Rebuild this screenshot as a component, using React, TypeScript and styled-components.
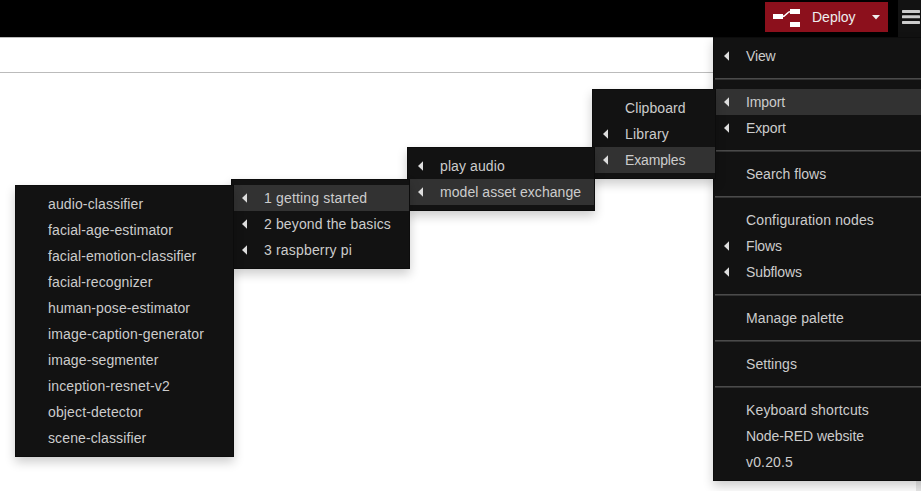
import React from "react";
import styled, { createGlobalStyle, css } from "styled-components";

const GlobalStyle = createGlobalStyle`
  * { box-sizing: border-box; }
  body {
    margin: 0;
    overflow: hidden;
    background: #fff;
    font-family: "Liberation Sans", Arial, sans-serif;
    font-size: 14px;
    line-height: 20px;
  }
`;

const Page = styled.div`
  display: flex;
  flex-direction: column;
  position: relative;
  width: 921px;
  height: 491px;
  overflow: hidden;
  background: #fff;
`;

const Header = styled.header`
  display: flex;
  justify-content: flex-end;
  align-items: flex-start;
  flex: none;
  height: 37px;
  background: #000;
`;

const DeployButton = styled.button`
  display: flex;
  align-items: center;
  width: 123px;
  height: 30px;
  margin: 2px 10px 0 0;
  padding: 0 8px;
  border: 0;
  background: #8c101c;
  color: #eee;
  font: inherit;
`;

const DeployLabel = styled.span`
  margin-left: 11px;
  flex: 1;
  text-align: left;
`;

const MenuButton = styled.button`
  display: flex;
  align-items: flex-start;
  width: 23px;
  height: 37px;
  padding: 9px 0 0 4px;
  border: 0;
  background: #121212;
`;

const TabBar = styled.div`
  flex: none;
  height: 36px;
  border-top: 1px solid #bbb;
  border-bottom: 1px solid #bbb;
`;

const Workspace = styled.main`
  display: flex;
  justify-content: flex-end;
  align-items: flex-end;
  flex: 1;
`;

const ScrollEdge = styled.div`
  width: 5px;
  height: 12px;
  background: #e8e8e8;
`;

const panel = css`
  margin: 0;
  list-style: none;
  background: #121212;
  border: 1px solid #0c0c0c;
  box-shadow: 0 5px 10px rgba(0, 0, 0, 0.2);
`;

const MainMenu = styled.ul`
  ${panel}
  position: absolute;
  top: 37px;
  left: 713px;
  width: 220px;
  padding: 5px 0 5px 2px;
`;

const SubMenu = styled.ul<{ $width: number }>`
  ${panel}
  position: absolute;
  top: 0;
  right: 100%;
  width: ${(p) => p.$width}px;
  padding: 5px 0 5px 2px;
`;

const Item = styled.li<{ $active?: boolean; $tracking?: number }>`
  display: flex;
  align-items: center;
  position: relative;
  height: 26px;
  padding-left: 8px;
  background: ${(p) => (p.$active ? "#323232" : "transparent")};
  color: #ccc;
  letter-spacing: ${(p) => p.$tracking ?? 0}px;
  white-space: nowrap;
`;

const ArrowSlot = styled.span`
  display: flex;
  flex: none;
  width: 22px;
`;

const Divider = styled.li`
  height: 2px;
  margin: 9px 0 9px -1px;
  background: #323232;
  border-top: 1px solid #4a4a4a;
`;

type Entry = {
  label: string;
  arrow?: boolean;
  active?: boolean;
  tracking?: number;
  width?: number;
  children?: Entry[];
};

const classifiers: Entry[] = [
  { label: "audio-classifier", tracking: 0.12 },
  { label: "facial-age-estimator", tracking: 0.1 },
  { label: "facial-emotion-classifier", tracking: 0.08 },
  { label: "facial-recognizer", tracking: 0.1 },
  { label: "human-pose-estimator", tracking: 0.1 },
  { label: "image-caption-generator", tracking: 0.15 },
  { label: "image-segmenter", tracking: 0.1 },
  { label: "inception-resnet-v2", tracking: 0.15 },
  { label: "object-detector", tracking: 0.14 },
  { label: "scene-classifier", tracking: 0.12 },
];

const exchange: Entry[] = [
  {
    label: "1 getting started",
    arrow: true,
    active: true,
    tracking: 0.17,
    width: 219,
    children: classifiers,
  },
  { label: "2 beyond the basics", arrow: true, tracking: 0.13 },
  { label: "3 raspberry pi", arrow: true, tracking: 0.17 },
];

const examples: Entry[] = [
  { label: "play audio", arrow: true, tracking: 0.1 },
  {
    label: "model asset exchange",
    arrow: true,
    active: true,
    tracking: 0.05,
    width: 179,
    children: exchange,
  },
];

const importEntries: Entry[] = [
  { label: "Clipboard", tracking: 0.08 },
  { label: "Library", arrow: true, tracking: 0.15 },
  {
    label: "Examples",
    arrow: true,
    active: true,
    tracking: -0.15,
    width: 188,
    children: examples,
  },
];

const groups: Entry[][] = [
  [{ label: "View", arrow: true, tracking: -0.15 }],
  [
    {
      label: "Import",
      arrow: true,
      active: true,
      tracking: -0.12,
      width: 124,
      children: importEntries,
    },
    { label: "Export", arrow: true, tracking: -0.12 },
  ],
  [{ label: "Search flows" }],
  [
    { label: "Configuration nodes", tracking: 0.14 },
    { label: "Flows", arrow: true, tracking: -0.15 },
    { label: "Subflows", arrow: true, tracking: -0.12 },
  ],
  [{ label: "Manage palette", tracking: 0.1 }],
  [{ label: "Settings", tracking: 0.05 }],
  [
    { label: "Keyboard shortcuts", tracking: 0.13 },
    { label: "Node-RED website", tracking: -0.07 },
    { label: "v0.20.5", tracking: 0.15 },
  ],
];

const Arrow = () => (
  <svg width="6" height="10" viewBox="0 0 6 10">
    <path d="M5 0.2V9.8L0 5Z" fill="#ddd" />
  </svg>
);

const DeployIcon = () => (
  <svg width="28" height="20" viewBox="0 0 28 20">
    <path d="M9 9.5C14 9.5 13 4.5 18 4.5" fill="none" stroke="#fff" strokeWidth="1.4" />
    <path d="M0 7H10V12H0ZM17 2H27V7H17ZM17 15H27V20H17Z" fill="#fff" />
  </svg>
);

const CaretDown = () => (
  <svg width="8" height="6" viewBox="0 0 8 6">
    <path d="M0 1H8L4 5.5Z" fill="#eee" />
  </svg>
);

const Bars = () => (
  <svg width="18" height="16" viewBox="0 0 18 16">
    <g fill="#ccc">
      <rect y="0.9" width="18" height="3" rx="0.6" />
      <rect y="6.3" width="18" height="3" rx="0.6" />
      <rect y="11.9" width="18" height="3" rx="0.6" />
    </g>
  </svg>
);

const MenuEntry = ({ entry }: { entry: Entry }) => (
  <Item $active={entry.active} $tracking={entry.tracking}>
    <ArrowSlot>{entry.arrow && <Arrow />}</ArrowSlot>
    {entry.label}
    {entry.children && (
      <SubMenu $width={entry.width ?? 160}>
        {entry.children.map((child) => (
          <MenuEntry key={child.label} entry={child} />
        ))}
      </SubMenu>
    )}
  </Item>
);

export default function App() {
  return (
    <>
      <GlobalStyle />
      <Page>
        <Header>
          <DeployButton>
            <DeployIcon />
            <DeployLabel>Deploy</DeployLabel>
            <CaretDown />
          </DeployButton>
          <MenuButton aria-label="Menu">
            <Bars />
          </MenuButton>
        </Header>
        <TabBar />
        <Workspace>
          <ScrollEdge />
        </Workspace>
        <MainMenu>
          {groups.map((group, index) => (
            <React.Fragment key={group[0].label}>
              {index > 0 && <Divider />}
              {group.map((entry) => (
                <MenuEntry key={entry.label} entry={entry} />
              ))}
            </React.Fragment>
          ))}
        </MainMenu>
      </Page>
    </>
  );
}
